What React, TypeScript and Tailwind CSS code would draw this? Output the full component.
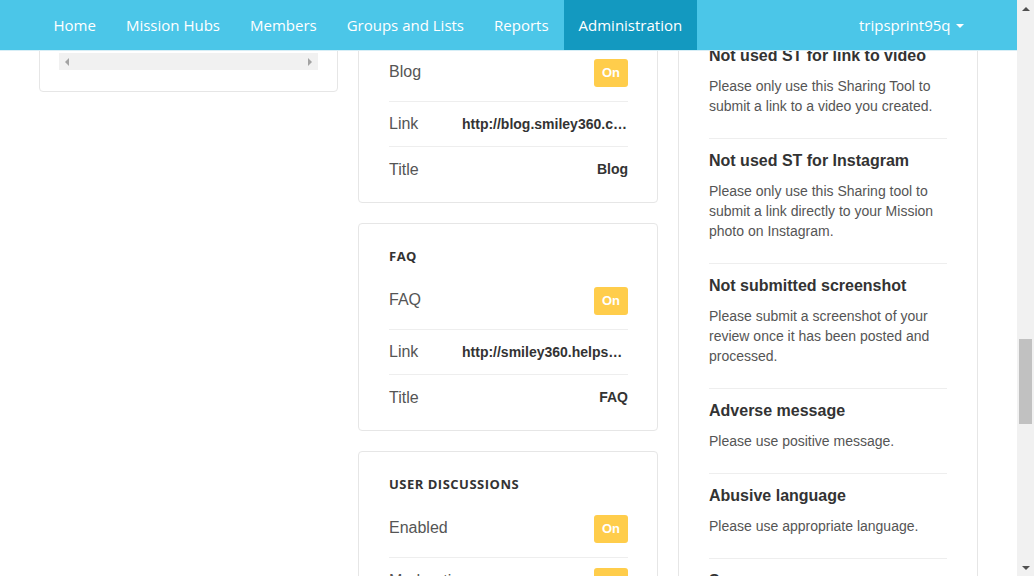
import React from 'react'

const navItems = ['Home', 'Mission Hubs', 'Members', 'Groups and Lists', 'Reports', 'Administration']

const rejections = [
  { title: 'Not used ST for link to video', text: 'Please only use this Sharing Tool to submit a link to a video you created.' },
  { title: 'Not used ST for Instagram', text: 'Please only use this Sharing tool to submit a link directly to your Mission photo on Instagram.' },
  { title: 'Not submitted screenshot', text: 'Please submit a screenshot of your review once it has been posted and processed.' },
  { title: 'Adverse message', text: 'Please use positive message.' },
  { title: 'Abusive language', text: 'Please use appropriate language.' },
  { title: 'Spam', text: 'Please do not spam.' },
]

function Badge() {
  return (
    <span className="flex h-[28px] w-[34px] items-center justify-center rounded-[3px] bg-[#ffcd4b] text-[13px] font-bold text-white">
      On
    </span>
  )
}

function SwitchRow({ label }: { label: string }) {
  return (
    <div className="flex items-start justify-between border-b border-[#eeeeee] pt-[10px] pb-[14px] first:pt-0">
      <span className="pt-[2px] text-[16px] leading-[22px] text-[#555]">{label}</span>
      <Badge />
    </div>
  )
}

function ValueRow({ label, value, last }: { label: string; value: string; last?: boolean }) {
  return (
    <div className={'flex h-[45px] items-center justify-between ' + (last ? '' : 'border-b border-[#eeeeee]')}>
      <span className="text-[16px] leading-[22px] text-[#555]">{label}</span>
      <span className="max-w-[166px] truncate text-[14px] font-bold text-[#333]">{value}</span>
    </div>
  )
}

function SettingCard({ heading, children }: { heading: string; children: React.ReactNode }) {
  return (
    <div className="rounded-[4px] border border-[#e6e6e6] bg-white pl-[30px] pr-[29px] pt-[22px] pb-[10px]">
      <h4 className="mb-[11px] text-[13px] leading-[20px] font-bold tracking-[0.5px] text-[#333] [font-family:'Open_Sans',sans-serif]">
        {heading}
      </h4>
      {children}
    </div>
  )
}

export default function App() {
  return (
    <div className="flex h-[576px] w-[1034px] overflow-hidden bg-white [font-family:'Liberation_Sans',Arial,sans-serif]">
      <div className="flex w-[1017px] flex-col">
        {/* top bar */}
        <nav className="h-[51px] shrink-0 border-b border-[#d7eef6] bg-[#4bc6e8] [font-family:'Open_Sans',sans-serif]">
          <div className="mx-auto flex h-full w-[970px] justify-between px-[15px]">
            <ul className="flex">
              {navItems.map((item) => (
                <li
                  key={item}
                  className={
                    'flex h-[50px] items-center px-[15px] text-[15px] text-white ' +
                    (item === 'Administration' ? 'bg-[#1399c0]' : '')
                  }
                >
                  {item}
                </li>
              ))}
            </ul>
            <div className="flex h-[50px] items-center px-[15px] text-[15px] text-white">
              tripsprint95q
              <span className="ml-[5px] mt-[1px] h-0 w-0 border-x-[4px] border-t-[4px] border-x-transparent border-t-white" />
            </div>
          </div>
        </nav>

        <div className="flex-1 overflow-hidden">
          <div className="-mt-[56px] grid grid-cols-[299px_300px_300px] items-start gap-[20px] pl-[39px]">
            {/* left column */}
            <div className="rounded-[4px] border border-[#e6e6e6] bg-white px-[19px] pt-[20px] pb-[21px]">
              <div className="flex h-[37px] items-end justify-between px-[28px] pb-[3px] text-[14px] leading-[16px] text-[#333]">
                <span>Campaign</span>
                <span>Type</span>
                <span>Reply</span>
              </div>
              <div className="flex h-[17px] items-center justify-between bg-[#f1f1f1] px-[6px]">
                <span className="h-0 w-0 border-y-[4px] border-r-[4px] border-y-transparent border-r-[#a3a3a3]" />
                <span className="h-0 w-0 border-y-[4px] border-l-[4px] border-y-transparent border-l-[#a3a3a3]" />
              </div>
            </div>

            {/* middle column */}
            <div className="flex flex-col gap-[20px]">
              <SettingCard heading="BLOG">
                <SwitchRow label="Blog" />
                <ValueRow label="Link" value="http://blog.smiley360.com/" />
                <ValueRow label="Title" value="Blog" last />
              </SettingCard>
              <SettingCard heading="FAQ">
                <SwitchRow label="FAQ" />
                <ValueRow label="Link" value="http://smiley360.helpscoutdocs.com/" />
                <ValueRow label="Title" value="FAQ" last />
              </SettingCard>
              <SettingCard heading="USER DISCUSSIONS">
                <SwitchRow label="Enabled" />
                <div className="flex items-start justify-between pt-[10px]">
                  <span className="pt-[2px] text-[16px] leading-[22px] text-[#555]">Moderation</span>
                  <Badge />
                </div>
              </SettingCard>
            </div>

            {/* right column */}
            <div className="rounded-[4px] border border-[#e6e6e6] bg-white px-[30px] pt-[37px]">
              {rejections.map((r) => (
                <div key={r.title} className="border-t border-[#eeeeee] pt-[12px] pb-[22px]">
                  <h5 className="mb-[10px] text-[16px] leading-[20px] font-bold text-[#333]">{r.title}</h5>
                  <p className="text-[14px] leading-[20px] text-[#555]">{r.text}</p>
                </div>
              ))}
            </div>
          </div>
        </div>
      </div>

      {/* window scrollbar */}
      <div className="flex h-[576px] w-[17px] flex-col items-center bg-[#f1f1f1]">
        <div className="flex h-[17px] items-center justify-center">
          <span className="h-0 w-0 border-x-[4px] border-b-[4px] border-x-transparent border-b-[#505050]" />
        </div>
        <div className="flex-1 pt-[322px]">
          <div className="h-[85px] w-[13px] bg-[#c1c1c1]" />
        </div>
        <div className="flex h-[17px] items-center justify-center">
          <span className="h-0 w-0 border-x-[4px] border-t-[4px] border-x-transparent border-t-[#505050]" />
        </div>
      </div>
    </div>
  )
}
